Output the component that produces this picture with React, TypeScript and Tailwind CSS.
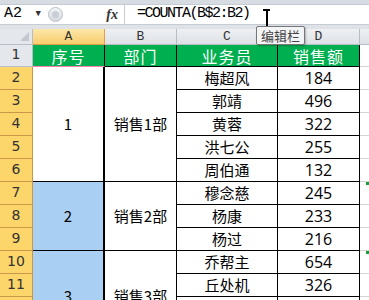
import React from "react";

const mono = { fontFamily: '"Liberation Mono", "Noto Sans CJK SC", monospace' };
const cjk = "font-['Noto_Sans_CJK_SC',sans-serif]";

const rowNums = [1, 2, 3, 4, 5, 6, 7, 8, 9, 10, 11, 12, 13];

const people: [string, number][] = [
  ["梅超风", 184],
  ["郭靖", 496],
  ["黄蓉", 322],
  ["洪七公", 255],
  ["周伯通", 132],
  ["穆念慈", 245],
  ["杨康", 233],
  ["杨过", 216],
  ["乔帮主", 654],
  ["丘处机", 326],
  ["", 0],
  ["", 0],
];

const rowStart = [
  "row-start-3", "row-start-4", "row-start-5", "row-start-6", "row-start-7", "row-start-8",
  "row-start-9", "row-start-10", "row-start-11", "row-start-12", "row-start-13", "row-start-14",
];

export default function App() {
  return (
    <div className="w-[369px] h-[300px] overflow-hidden bg-[#dfe3e8] relative">
      <div className="h-[4px] bg-[#d7dce3]" />
      {/* formula bar */}
      <div className="h-[21px] flex bg-white border-y border-[#c6ccd4]">
        <div className="w-[46px] flex items-center justify-between pl-[4px] pr-[5px] text-[15px] text-black" style={mono}>
          <span>A2</span>
          <span className="text-[9px] text-[#333]">▼</span>
        </div>
        <div className="w-[78px] flex items-center justify-between pl-[2px] pr-[6px]">
          <div className="w-[15px] h-[15px] rounded-full border border-[#b8bec6] bg-gradient-to-b from-[#f4f5f7] to-[#d6dadf] flex items-center justify-center">
            <div className="w-[7px] h-[7px] rounded-full bg-[#c9ced5]" />
          </div>
          <span className="italic font-bold text-[14px] text-[#333] font-['Liberation_Serif',serif]">fx</span>
        </div>
        <div className="flex-1 border-l border-[#c6ccd4] flex items-center pl-[12px] text-[15px] tracking-[-1.5px] text-black" style={mono}>
          =COUNTA(B$2:B2)
        </div>
      </div>
      <div className="h-[4px]" />

      {/* sheet */}
      <div className="grid grid-cols-[33px_72px_72px_101px_82px_1fr] grid-rows-[16px_22px_repeat(12,23px)] bg-white">
        {/* column headers */}
        <div className="bg-[#e4e7eb] border-r border-b border-[#b6bdc6] relative">
          <div className="absolute right-[3px] bottom-[3px] w-0 h-0 border-l-[9px] border-l-transparent border-b-[9px] border-b-[#c3c8cf]" />
        </div>
        <div className="bg-gradient-to-b from-[#fce7a7] to-[#f8cd6c] border-r border-b border-[#dca04a] flex items-center justify-center text-[13px] text-[#333]" style={mono}>A</div>
        {["B", "C", "D"].map((c) => (
          <div key={c} className="bg-gradient-to-b from-[#eef0f3] to-[#dde1e6] border-r border-b border-[#b6bdc6] flex items-center justify-center text-[13px] text-[#333]" style={mono}>{c}</div>
        ))}
        <div className="bg-gradient-to-b from-[#eef0f3] to-[#dde1e6] border-b border-[#b6bdc6]" />

        {/* row headers */}
        {rowNums.map((n, i) => (
          <div
            key={n}
            className={`col-start-1 ${i === 0 ? "row-start-2 bg-[#e4e7eb] border-[#b6bdc6]" : "bg-[#fdd66b] border-[#c9974a]"} ${i > 0 ? rowStart[i - 1] : ""} border-r border-b flex items-end justify-center pb-[1px] text-[14px] text-[#333] font-['DejaVu_Sans',sans-serif]`}
          >
            {n}
          </div>
        ))}

        {/* title row */}
        {["序号", "部门", "业务员", "销售额"].map((t, i) => (
          <div
            key={t}
            className={`row-start-2 ${["col-start-2", "col-start-3", "col-start-4", "col-start-5"][i]} bg-[#00b050] border-r border-b border-black ${i === 0 ? "border-b-[#ff7fb0]" : ""} flex items-center justify-center text-white text-[16px] tracking-[1px] ${cjk}`}
          >
            {t}
          </div>
        ))}
        <div className="row-start-2 col-start-6 border-b border-[#d4d4d4]" />

        {/* column A merged */}
        <div className={`col-start-2 row-start-3 row-span-5 bg-white border-r-2 border-b border-black flex items-center justify-center text-[15px] text-black ${cjk}`}>1</div>
        <div className={`col-start-2 row-start-8 row-span-3 bg-[#a9cff2] border-r-2 border-b border-black flex items-center justify-center text-[15px] text-black ${cjk}`}>2</div>
        <div className={`col-start-2 row-start-11 row-span-4 bg-[#a9cff2] border-r-2 border-b border-black flex items-center justify-center text-[15px] text-black ${cjk}`}>3</div>

        {/* column B merged */}
        <div className={`col-start-3 row-start-3 row-span-5 border-r border-b border-black flex items-center justify-center text-[15px] text-black ${cjk}`}>销售1部</div>
        <div className={`col-start-3 row-start-8 row-span-3 border-r border-b border-black flex items-center justify-center text-[15px] text-black ${cjk}`}>销售2部</div>
        <div className={`col-start-3 row-start-11 row-span-4 border-r border-b border-black flex items-center justify-center text-[15px] text-black ${cjk}`}>销售3部</div>

        {/* C, D, E */}
        {people.map(([name, amt], i) => (
          <React.Fragment key={i}>
            <div className={`col-start-4 ${rowStart[i]} border-r border-b border-black flex items-center justify-center text-[15px] text-black ${cjk}`}>{name}</div>
            <div className={`col-start-5 ${rowStart[i]} border-r border-b border-black flex items-center justify-center text-[16px] text-black font-['Open_Sans',sans-serif]`}>{amt || ""}</div>
            <div className={`col-start-6 ${rowStart[i]} border-b border-[#d4d4d4] relative`}>
              {(i === 5 || i === 8) && <div className="absolute left-[6px] top-0 w-[3px] h-[3px] bg-[#1e9a3c]" />}
            </div>
          </React.Fragment>
        ))}
      </div>

      {/* cursor + tooltip */}
      <div className="absolute left-[262px] top-[9px] w-[9px] h-[19px] flex flex-col items-center">
        <div className="w-[7px] h-[2px] bg-black" />
        <div className="w-[2px] flex-1 bg-black" />
        <div className="w-[7px] h-[2px] bg-black" />
      </div>
      <div className={`absolute left-[256px] top-[26px] h-[19px] px-[4px] flex items-center bg-[#f3f4f6] border border-[#767676] rounded-[2px] shadow-[1px_1px_2px_rgba(0,0,0,0.25)] text-[13px] text-[#444] ${cjk}`}>
        编辑栏
      </div>
    </div>
  );
}
